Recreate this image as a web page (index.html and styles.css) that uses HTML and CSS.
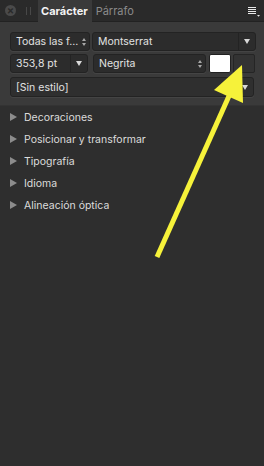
FILE: index.html
```html
<!DOCTYPE html>
<html lang="es">
<head>
    <meta charset="UTF-8">
    <meta name="viewport" content="width=device-width, initial-scale=1.0">
    <title>Carácter</title>
    <link rel="stylesheet" href="styles.css">
</head>
<body>
    <div class="panel">
        <div class="tabbar">
            <span class="close">&times;</span>
            <span class="grip"></span>
            <span class="tab active">Carácter</span>
            <span class="tab">Párrafo</span>
            <span class="spacer"></span>
            <span class="menu">
                <svg width="12" height="10" viewBox="0 0 12 10">
                    <rect x="0" y="0" width="8" height="1" fill="#e8e8e8"/>
                    <rect x="0" y="2" width="8" height="1" fill="#e8e8e8"/>
                    <rect x="0" y="4" width="8" height="1" fill="#e8e8e8"/>
                    <rect x="0" y="6" width="8" height="1" fill="#e8e8e8"/>
                    <path d="M9 8 L12 8 L10.5 9.8 Z" fill="#e8e8e8"/>
                </svg>
            </span>
        </div>

        <div class="props">
            <div class="row">
                <div class="field collection">
                    <span class="label">Todas las f...</span>
                    <span class="stepper"><i class="up"></i><i class="down"></i></span>
                </div>
                <div class="field family">
                    <span class="label">Montserrat</span>
                    <span class="drop"><i class="tri"></i></span>
                </div>
            </div>
            <div class="row row-two">
                <div class="field size">
                    <span class="label">353,8 pt</span>
                    <span class="drop"><i class="tri"></i></span>
                </div>
                <div class="field weight">
                    <span class="label">Negrita</span>
                    <span class="stepper"><i class="up"></i><i class="down"></i></span>
                </div>
                <div class="swatch"></div>
                <div class="swatch empty"></div>
            </div>
            <div class="row row-three">
                <div class="field style">
                    <span class="label">[Sin estilo]</span>
                    <span class="drop plain"><i class="tri"></i></span>
                </div>
            </div>
        </div>

        <ul class="sections">
            <li><i class="arrow-right"></i>Decoraciones</li>
            <li><i class="arrow-right"></i>Posicionar y transformar</li>
            <li><i class="arrow-right"></i>Tipografía</li>
            <li><i class="arrow-right"></i>Idioma</li>
            <li><i class="arrow-right"></i>Alineación óptica</li>
        </ul>

        <svg class="pointer" width="264" height="466" viewBox="0 0 264 466">
            <line x1="157" y1="257" x2="229" y2="96" stroke="#f6f23a" stroke-width="5" stroke-linecap="butt"/>
            <polygon points="242,65 214,90 243,103" fill="#f6f23a"/>
        </svg>
    </div>
</body>
</html>
```

FILE: styles.css
```css
body {
    margin: 0;
    background-color: #2e2e2e;
    font-family: Inter, "Liberation Sans", sans-serif;
    font-size: 10.5px;
    color: #e2e2e2;
}

.panel {
    position: relative;
    width: 264px;
    height: 466px;
    overflow: hidden;
}

.tabbar {
    display: flex;
    align-items: stretch;
    height: 21px;
    background-color: #2a2a2a;
    border-bottom: 1px solid #222;
}

.close {
    width: 11px;
    height: 11px;
    margin: 5px 0 0 5px;
    border-radius: 50%;
    background-color: #4a4a4a;
    color: #2a2a2a;
    font-size: 11px;
    line-height: 10px;
    text-align: center;
    font-weight: bold;
}

.grip {
    width: 3px;
    height: 8px;
    margin: 7px 0 0 10px;
    border-left: 1px solid #484848;
    border-right: 1px solid #484848;
}

.tab {
    display: flex;
    align-items: center;
    padding: 0 4px;
    color: #8a8a8a;
    font-size: 11px;
}

.tab.active {
    margin-left: 7px;
    padding: 0 4px 0 3px;
    background-color: #3a3a3a;
    color: #f4f4f4;
    font-weight: bold;
    margin-bottom: -1px;
}

.spacer {
    flex: 1;
}

.menu {
    padding: 7px 4px 0 0;
}

.props {
    background-color: #3a3a3a;
    padding: 10px 8px 8px 10px;
    border-bottom: 1px solid #333;
}

.row {
    display: flex;
    gap: 2px;
    height: 19px;
}

.row-two {
    margin-top: 3px;
    gap: 3px;
}

.row-three {
    margin-top: 4px;
    height: 20px;
}

.field {
    display: flex;
    align-items: center;
    box-sizing: border-box;
    background-color: #2c2c2c;
    border: 1px solid #232323;
    border-radius: 3px;
    box-shadow: 0 1px 0 #444;
}

.label {
    flex: 1;
    padding-left: 5px;
    white-space: nowrap;
}

.collection {
    width: 80px;
}

.family {
    width: 164px;
}

.size {
    width: 78px;
    margin-right: 2px;
}

.weight {
    width: 113px;
}

.style {
    width: 244px;
    background-color: #2f2f2f;
}

.stepper {
    display: flex;
    flex-direction: column;
    gap: 2px;
    width: 10px;
    align-items: center;
}

.stepper i {
    width: 0;
    height: 0;
    border-left: 2.5px solid transparent;
    border-right: 2.5px solid transparent;
}

.stepper .up {
    border-bottom: 3px solid #a8a8a8;
}

.stepper .down {
    border-top: 3px solid #a8a8a8;
}

.drop {
    display: flex;
    align-items: center;
    justify-content: center;
    width: 16px;
    height: 100%;
    border-left: 1px solid #232323;
}

.drop.plain {
    border-left: none;
}

.tri {
    width: 0;
    height: 0;
    border-left: 3.5px solid transparent;
    border-right: 3.5px solid transparent;
    border-top: 5px solid #d8d8d8;
}

.swatch {
    width: 22px;
    height: 19px;
    box-sizing: border-box;
    background-color: #ffffff;
    border: 1px solid #222;
    border-radius: 2px;
}

.swatch.empty {
    margin-left: -1px;
    background-color: #333;
    border-color: #252525;
}

.sections {
    list-style: none;
    margin: 0;
    padding: 0;
}

.sections li {
    display: flex;
    align-items: center;
    height: 22px;
    padding-left: 10px;
    color: #dcdcdc;
}

.arrow-right {
    width: 0;
    height: 0;
    border-top: 4px solid transparent;
    border-bottom: 4px solid transparent;
    border-left: 7px solid #8c8c8c;
    margin-right: 7px;
}

.pointer {
    position: absolute;
    left: 0;
    top: 0;
}
```
